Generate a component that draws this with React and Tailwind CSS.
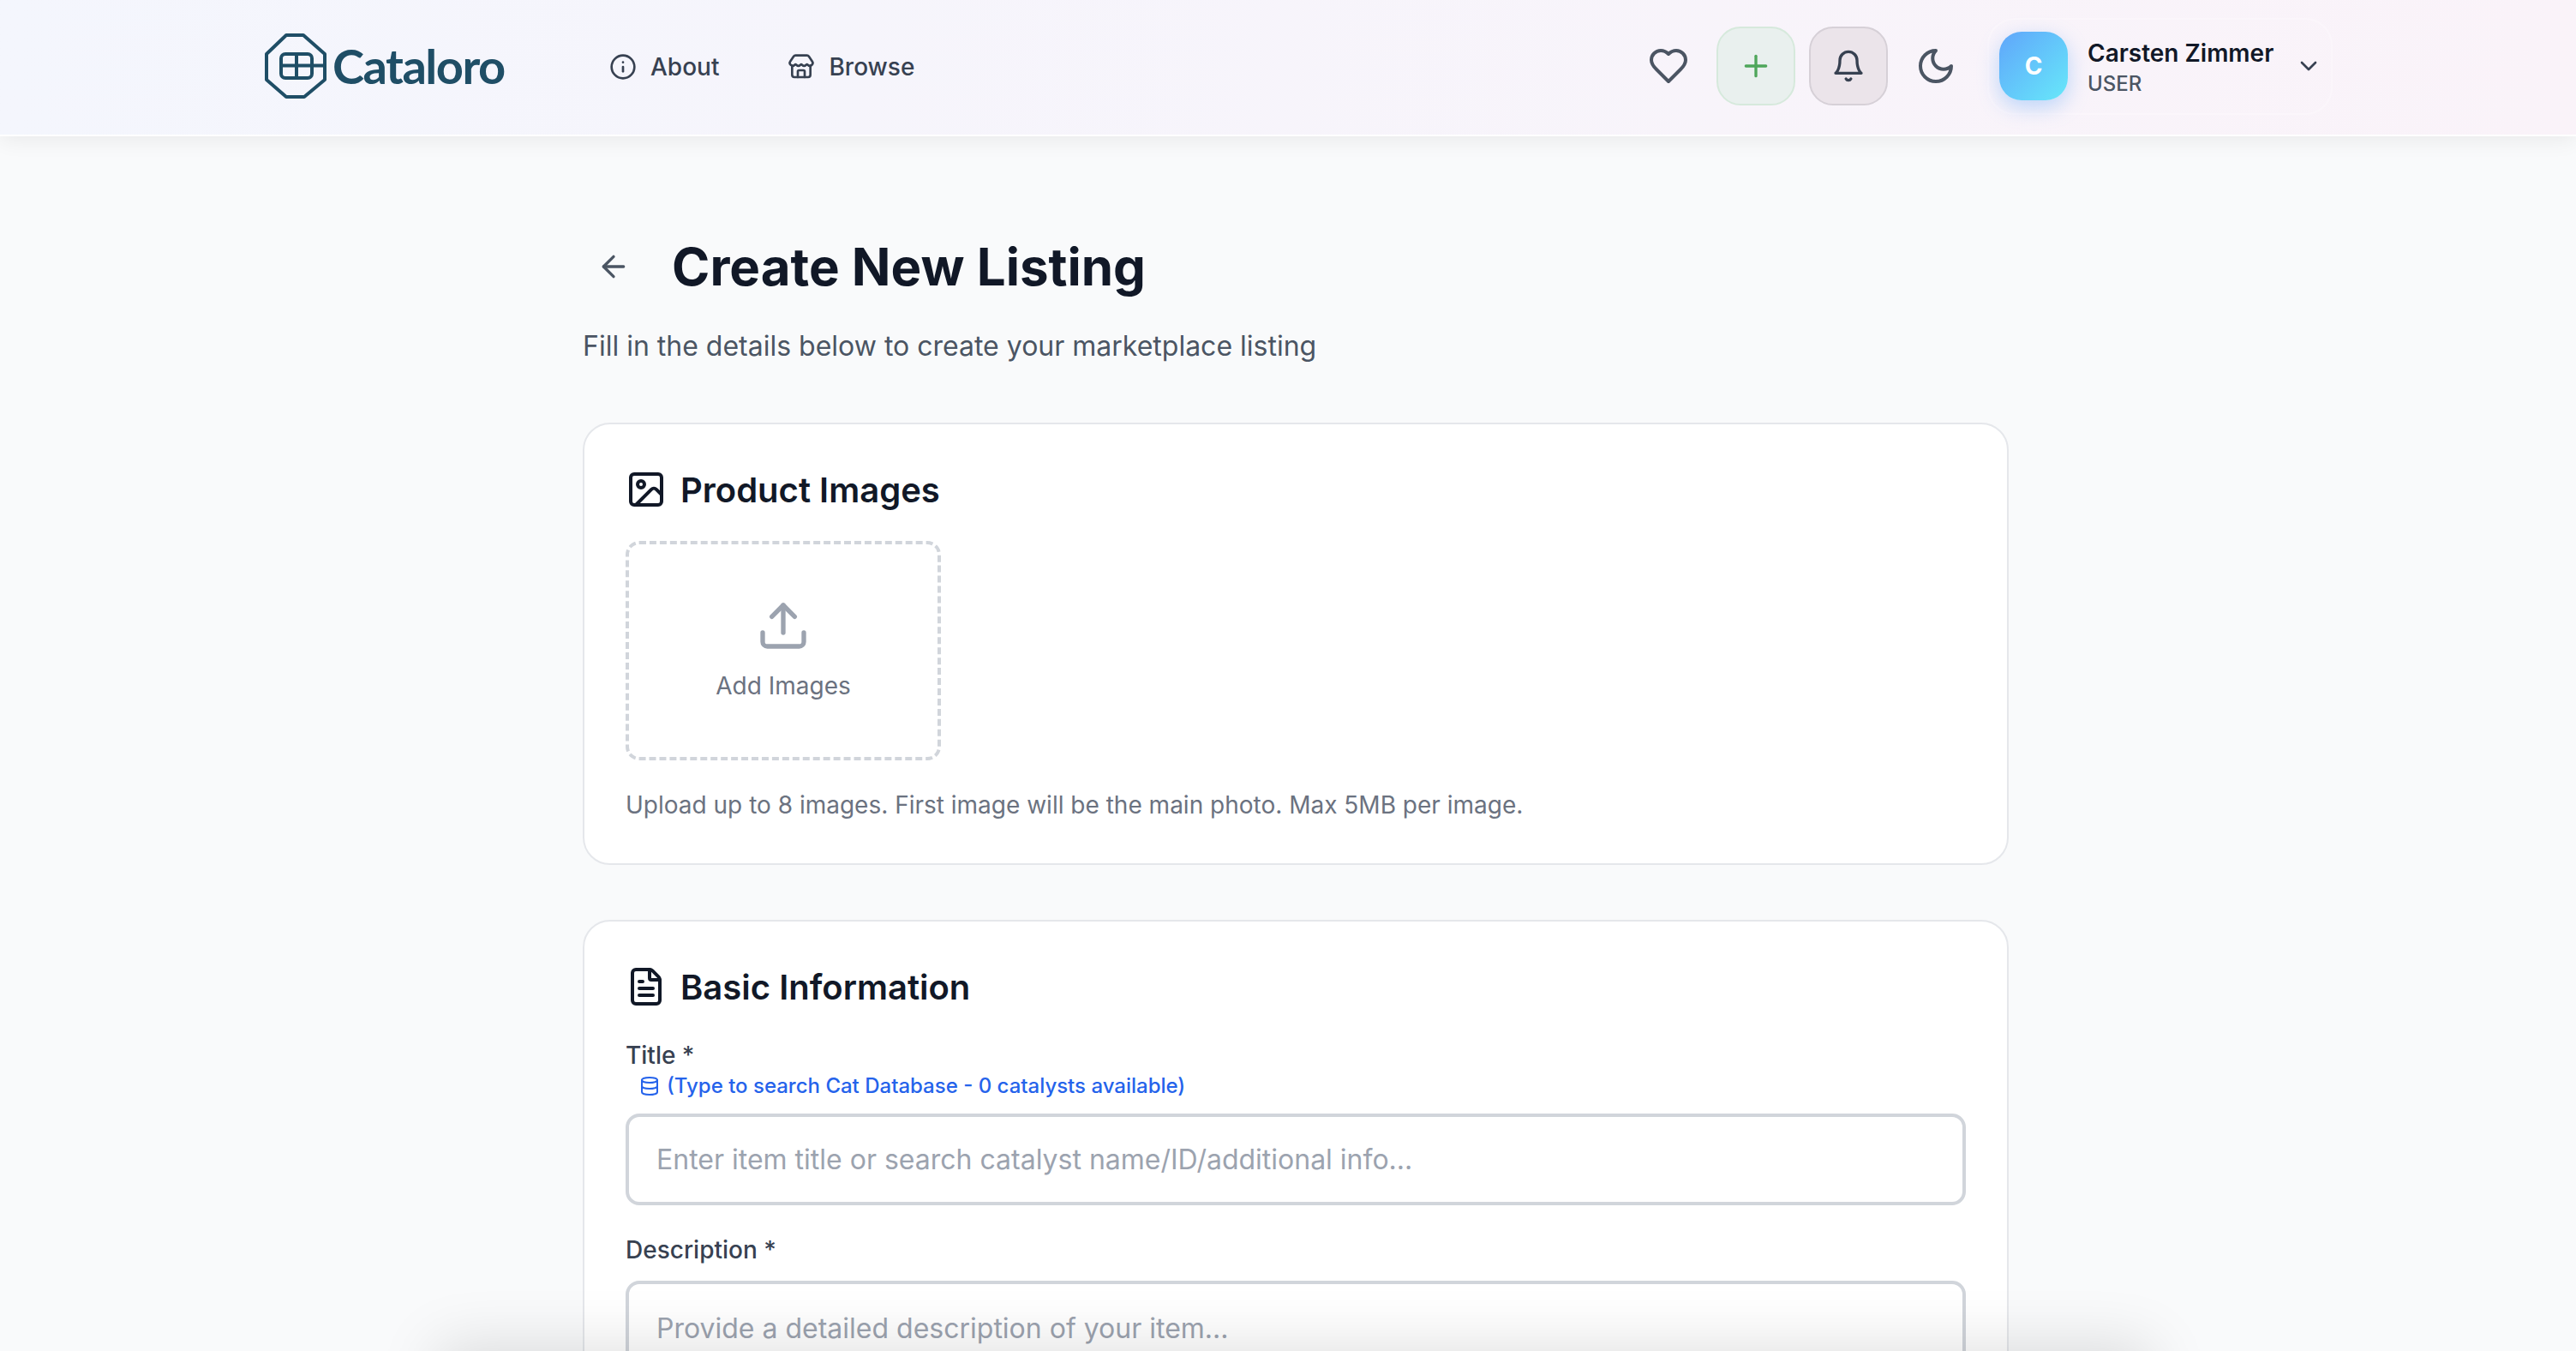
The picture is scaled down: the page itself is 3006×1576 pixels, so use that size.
import React from "react";
import { Info, Store, Plus, ChevronDown, ArrowLeft, Image, Upload, FileText, Database } from "lucide-react";

const Logo = () => (
  <svg width="74" height="78" viewBox="16 17 74 78" fill="none" stroke="#1f4e66" strokeWidth="4" strokeLinejoin="round">
    <path d="M42 20 H62 L87 42 V72 L63 92 H42 L19 72 V42 Z" />
    <rect x="36" y="42" width="36" height="28" rx="5" />
    <path d="M54 42 V70 M36 55.5 H87" />
  </svg>
);

// older lucide shapes, the package's current ones differ
const HeartIcon = () => (
  <svg width="48" height="48" viewBox="0 0 24 24" fill="none" stroke="currentColor" strokeWidth="2" strokeLinecap="round" strokeLinejoin="round" className="text-[#4b5563] mr-[32px]">
    <path d="M19 14c1.49-1.46 3-3.21 3-5.5A5.5 5.5 0 0 0 16.5 3c-1.76 0-3 .5-4.5 2-1.5-1.5-2.74-2-4.5-2A5.5 5.5 0 0 0 2 8.5c0 2.3 1.5 4.05 3 5.5l7 7Z" />
  </svg>
);

const MoonIcon = () => (
  <svg width="48" height="48" viewBox="0 0 24 24" fill="none" stroke="currentColor" strokeWidth="2" strokeLinecap="round" strokeLinejoin="round" className="text-[#4b5563] mr-[36px]">
    <path d="M12 3a6 6 0 0 0 9 9 9 9 0 1 1-9-9Z" />
  </svg>
);

const BellIcon = () => (
  <svg width="40" height="40" viewBox="0 0 24 24" fill="none" stroke="currentColor" strokeWidth="2" strokeLinecap="round" strokeLinejoin="round" className="text-[#374151]">
    <path d="M6 8a6 6 0 0 1 12 0c0 7 3 9 3 9H3s3-2 3-9" />
    <path d="M10.3 21a1.94 1.94 0 0 0 3.4 0" />
  </svg>
);

const Header = () => (
  <header className="h-[159px] border-b-2 border-white bg-gradient-to-r from-[#f4f6fd] to-[#faf3f9] shadow-[0_4px_24px_rgba(0,0,0,0.07)] flex items-center pl-[308px] pr-[284px] pb-[3px]">
    <div className="flex items-center gap-[6px] w-[403px]">
      <Logo />
      <span className="text-[56px] font-bold tracking-[-1.5px] text-[#1f4e66] font-['Lato',sans-serif]">Cataloro</span>
    </div>
    <nav className="flex items-center gap-[80px] pt-[1px] text-[28px] font-medium text-[#374151]">
      <a className="flex items-center gap-[16px]"><Info size={32} strokeWidth={2} />About</a>
      <a className="flex items-center gap-[16px]"><Store size={32} strokeWidth={2} />Browse</a>
    </nav>
    <div className="ml-auto flex items-center">
      <HeartIcon />
      <button className="w-[92px] h-[92px] rounded-[28px] bg-[#e9f0ee] border-2 border-[#d6e9dc] flex items-center justify-center mr-[16px]">
        <Plus size={40} className="text-[#4ea65a]" />
      </button>
      <button className="w-[92px] h-[92px] rounded-[28px] bg-[#ebe4ea] border-2 border-[#d6d0d7] flex items-center justify-center mr-[32px]">
        <BellIcon />
      </button>
      <MoonIcon />
      <div className="flex items-center h-[113px] w-[403px] pl-[12px] pr-[10px] rounded-[32px] border-2 border-[#fbf6fb]">
        <div className="w-[80px] h-[80px] rounded-[26px] bg-gradient-to-br from-[#60a5fa] to-[#67e8f9] shadow-[0_8px_24px_rgba(96,165,250,0.4)] flex items-center justify-center text-white text-[28px] font-bold">C</div>
        <div className="ml-[23px] pt-[3px] flex flex-col">
          <span className="text-[28px] leading-[38px] font-semibold text-[#111827]">Carsten Zimmer</span>
          <span className="text-[24px] leading-[34px] font-medium text-[#4b5563]">USER</span>
        </div>
        <ChevronDown size={32} className="ml-auto text-[#374151]" />
      </div>
    </div>
  </header>
);

const Card = ({ icon, title, children }) => (
  <section className="bg-white border-2 border-[#e5e7eb] rounded-[32px] p-[48px] mb-[64px]">
    <div className="flex items-center gap-[16px] h-[56px] mb-[32px]">
      {icon}
      <h2 className="text-[40px] font-semibold text-[#111827] pt-[1px]">{title}</h2>
    </div>
    {children}
  </section>
);

export default function App() {
  return (
    <div className="relative w-[3006px] h-[1576px] overflow-hidden bg-[#f9fafb] font-['Inter',sans-serif]">
      <Header />
      <main className="w-[1664px] ml-[680px] pt-[116px]">
        <div className="flex items-center h-[72px] mb-[29px]">
          <button className="p-[16px] mr-[32px] text-[#4b5563]"><ArrowLeft size={40} /></button>
          <h1 className="text-[60px] font-bold text-[#111827]">Create New Listing</h1>
        </div>
        <p className="text-[32px] leading-[56px] text-[#4b5563] mb-[61px]">Fill in the details below to create your marketplace listing</p>

        <Card icon={<Image size={48} className="text-[#111827]" />} title="Product Images">
          <div className="w-[368px] h-[256px] border-4 border-dashed border-[#d1d5db] rounded-[16px] flex flex-col items-center justify-center">
            <Upload size={64} className="text-[#9ca3af] mb-[18px]" />
            <span className="text-[28px] leading-[40px] text-[#6b7280]">Add Images</span>
          </div>
          <p className="mt-[32px] pt-[1px] text-[28px] leading-[39px] text-[#6b7280]">Upload up to 8 images. First image will be the main photo. Max 5MB per image.</p>
        </Card>

        <Card icon={<FileText size={48} className="text-[#111827]" />} title="Basic Information">
          <label className="block pt-[1px] text-[28px] leading-[39px] font-medium text-[#374151]">Title *</label>
          <div className="flex items-center gap-[8px] ml-[16px] h-[32px] mb-[16px] text-[24px] font-medium text-[#2563eb]">
            <Database size={24} />
            (Type to search Cat Database - 0 catalysts available)
          </div>
          <input className="block w-full h-[107px] border-4 border-[#d1d5db] rounded-[16px] px-[32px] text-[32px] placeholder:text-[#9ca3af]" placeholder="Enter item title or search catalyst name/ID/additional info..." />
          <label className="block mt-[32px] mb-[16px] pt-[1px] text-[28px] leading-[39px] font-medium text-[#374151]">Description *</label>
          <textarea className="block w-full h-[200px] border-4 border-[#d1d5db] rounded-[16px] px-[32px] py-[28px] text-[32px] resize-none placeholder:text-[#9ca3af]" placeholder="Provide a detailed description of your item..." />
        </Card>
      </main>
      <div className="absolute left-[560px] top-[1620px] w-[1900px] h-[40px] shadow-[0_0_70px_50px_rgba(0,0,0,0.13)]" />
    </div>
  );
}
